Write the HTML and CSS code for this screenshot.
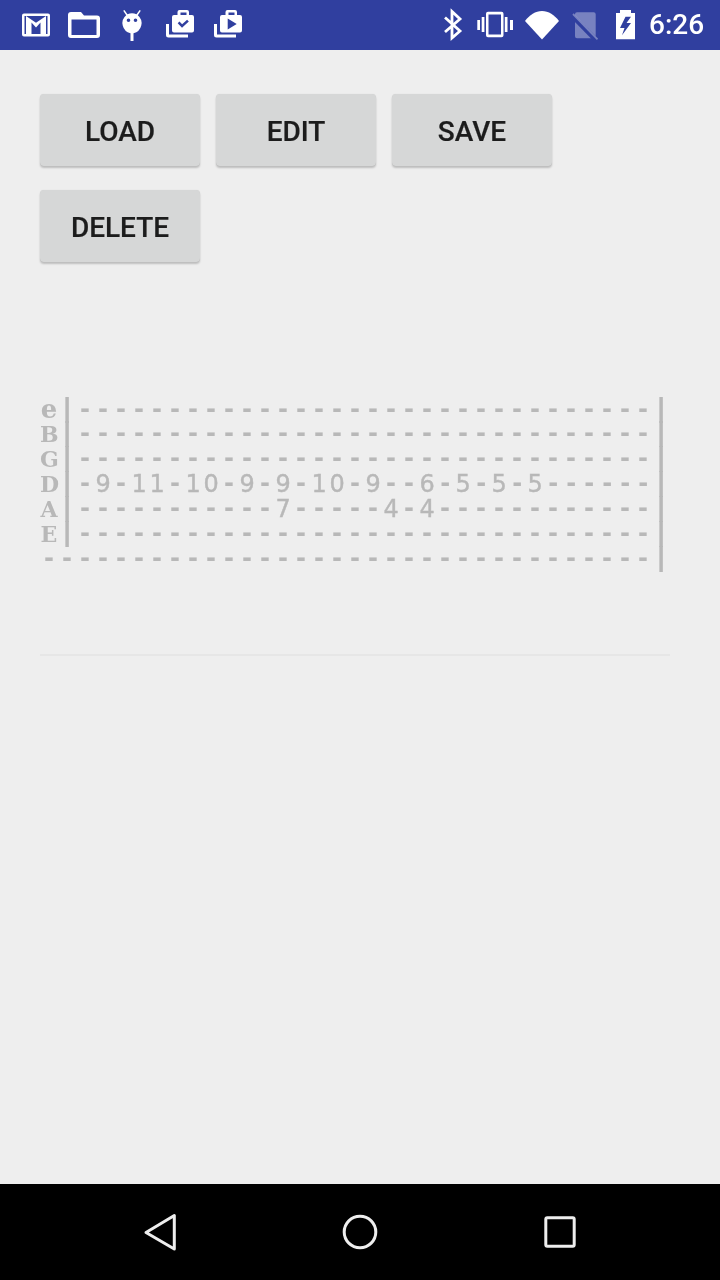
FILE: index.html
```html
<!DOCTYPE html>
<html lang="en">
<head>
<meta charset="utf-8">
<title>Tabs</title>
<link rel="stylesheet" href="styles.css">
</head>
<body>
<div class="screen">
  <header class="status">
    <div class="status-group">
      <svg class="ic w48" viewBox="12 0 48 50"><path fill="#fff" fill-rule="evenodd" d="M24 13.500h24a2 2 0 0 1 2 2v19a2 2 0 0 1-2 2H24a2 2 0 0 1-2-2v-19a2 2 0 0 1 2-2zM24.500 16v18h23V16z"/><path fill="#fff" d="M26 16L36 22.800 46 16V34H40.500V22.500L36 27.500 31.500 22.500V34H26z"/></svg>
      <svg class="ic w48" viewBox="60 0 48 50"><path fill="#fff" fill-rule="evenodd" d="M71 12h10l3 3.500h13a3 3 0 0 1 3 3V35a3 3 0 0 1-3 3H71a3 3 0 0 1-3-3V15a3 3 0 0 1 3-3zM71.500 19.500v15.500h25V19.500z"/></svg>
      <svg class="ic w48" viewBox="108 0 48 50"><path fill="#fff" fill-rule="evenodd" d="M123.200 10.800l1.200-.8 3.100 4.300a10.300 10.300 0 0 1 9 0l3.100-4.300 1.200.8-3 4.400A10.300 10.300 0 0 1 133.500 33.200V41h-3V33.200A10.300 10.300 0 0 1 126.200 15.200zM128.500 18.500a1.800 1.800 0 1 0 0 3.600 1.800 1.800 0 0 0 0-3.600zm7 0a1.800 1.800 0 1 0 0 3.600 1.800 1.800 0 0 0 0-3.600z"/></svg>
      <svg class="ic w48" viewBox="156 0 48 50"><path fill="#fff" fill-rule="evenodd" d="M166 24h3v10.500h19v3h-19.500a2.500 2.500 0 0 1-2.500-2.500zM174 15h3.500v-3a2 2 0 0 1 2-2h7.500a2 2 0 0 1 2 2v3h3a2 2 0 0 1 2 2v13.500a2 2 0 0 1-2 2h-18a2 2 0 0 1-2-2V17a2 2 0 0 1 2-2zm6.500-2.500V15h6v-2.500zM179.500 21.500l-1.800 1.800 4.300 4.500 6.800-6.300-1.700-1.800-5 4.600z"/></svg>
      <svg class="ic w48" viewBox="204 0 48 50"><path fill="#fff" fill-rule="evenodd" d="M214 24h3v10.500h19v3h-19.500a2.500 2.500 0 0 1-2.500-2.500zM222 15h3.500v-3a2 2 0 0 1 2-2h7.500a2 2 0 0 1 2 2v3h3a2 2 0 0 1 2 2v13.500a2 2 0 0 1-2 2h-18a2 2 0 0 1-2-2V17a2 2 0 0 1 2-2zm6.500-2.500V15h6v-2.500zM227.700 18.500v11l9-5.500z"/></svg>
    </div>
    <div class="status-group">
      <svg class="ic w48" viewBox="429 0 48 50"><path fill="none" stroke="#fff" stroke-width="2.800" d="M445 17.500L460 31l-8 7V11.500l8 7.500-15 13"/></svg>
      <svg class="ic w36" viewBox="477 0 36 50"><path fill="#fff" fill-rule="evenodd" d="M488 11.700h13.500a2 2 0 0 1 2 2v21.600a2 2 0 0 1-2 2H488a2 2 0 0 1-2-2V13.700a2 2 0 0 1 2-2zm.500 2.800v20h12.500v-20zM477.300 20h2.700v10h-2.700zM481.700 17h2.700v15h-2.700zM504.800 17h2.700v15h-2.700zM510 20h3v10h-3z"/></svg>
      <svg class="ic w58" viewBox="513 0 58 50"><path fill="#fff" d="M542 39.500L525 21c4.500-6 10.500-10 17-10s12.500 4 17 10z"/></svg>
      <svg class="ic w29" viewBox="571 0 29 50"><path fill="#fff" fill-opacity=".35" d="M577 12.300h16.700a2 2 0 0 1 2 2v22a2 2 0 0 1-2 2H577a2 2 0 0 1-2-2v-22a2 2 0 0 1 2-2z"/><path stroke="#303f9f" stroke-width="5" d="M571 14.500L598 42"/><path stroke="#fff" stroke-opacity=".35" stroke-width="1.800" d="M573 14l24.500 25.300"/></svg>
      <svg class="ic w49" viewBox="600 0 49 50"><path fill="#fff" fill-rule="evenodd" d="M620 10h11v3h4v26.300h-19V13h4zM625.500 16.800L620 28h4.500L622 35.300 631 23h-4.500l4.500-6.200z"/></svg>
      <span class="clock">6:26</span>
    </div>
  </header>

  <main class="content">
    <div class="buttons">
      <button class="btn">Load</button>
      <button class="btn">Edit</button>
      <button class="btn">Save</button>
      <button class="btn">Delete</button>
    </div>
    <div class="tab">
      <div class="row"><span class="str low">e</span><span class="bar">|</span><span class="dash">--------------------------------</span><span class="bar end">|</span></div>
      <div class="row"><span class="str">B</span><span class="bar">|</span><span class="dash">--------------------------------</span><span class="bar end">|</span></div>
      <div class="row"><span class="str">G</span><span class="bar">|</span><span class="dash">--------------------------------</span><span class="bar end">|</span></div>
      <div class="row"><span class="str">D</span><span class="bar">|</span><span class="dash">-</span><span class="num">9</span><span class="dash">-</span><span class="num">11</span><span class="dash">-</span><span class="num">10</span><span class="dash">-</span><span class="num">9</span><span class="dash">-</span><span class="num">9</span><span class="dash">-</span><span class="num">10</span><span class="dash">-</span><span class="num">9</span><span class="dash">--</span><span class="num">6</span><span class="dash">-</span><span class="num">5</span><span class="dash">-</span><span class="num">5</span><span class="dash">-</span><span class="num">5</span><span class="dash">------</span><span class="bar end">|</span></div>
      <div class="row"><span class="str">A</span><span class="bar">|</span><span class="dash">-----------</span><span class="num">7</span><span class="dash">-----</span><span class="num">4</span><span class="dash">-</span><span class="num">4</span><span class="dash">------------</span><span class="bar end">|</span></div>
      <div class="row"><span class="str">E</span><span class="bar">|</span><span class="dash">--------------------------------</span><span class="bar end">|</span></div>
      <div class="row"><span class="dash">----------------------------------</span><span class="bar end">|</span></div>
    </div>
    <div class="rule"></div>
  </main>

  <nav class="navbar">
    <svg class="nav-ic" viewBox="0 0 40 40"><path fill="none" stroke="#eee" stroke-width="3" stroke-linejoin="round" d="M6 20.500L34.300 3.500V37z"/></svg>
    <svg class="nav-ic" viewBox="0 0 40 40"><circle cx="20" cy="20" r="15.800" fill="none" stroke="#eee" stroke-width="3"/></svg>
    <svg class="nav-ic" viewBox="0 0 40 40"><rect x="5.800" y="5.800" width="28.400" height="28.400" rx="1.500" fill="none" stroke="#eee" stroke-width="3"/></svg>
  </nav>
</div>
</body>
</html>
```

FILE: styles.css
```css
* { box-sizing: border-box; }
html, body { margin: 0; padding: 0; }
body { background: #eeeeee; font-family: "Roboto", sans-serif; }
.screen { width: 720px; height: 1280px; display: flex; flex-direction: column; overflow: hidden; }

.status { height: 50px; flex: none; background: #303f9f; display: flex; justify-content: space-between; align-items: center; padding: 0 16px 0 12px; }
.status-group { display: flex; align-items: center; }
.ic { height: 50px; display: block; flex: none; }
.w48 { width: 48px; }
.w36 { width: 36px; }
.w58 { width: 58px; }
.w29 { width: 29px; }
.w49 { width: 49px; }
.clock { flex: none; width: 55px; color: #fff; font-size: 28px; font-weight: 500; line-height: 50px; will-change: transform; }

.content { flex: 1; padding: 44px 50px 0 40px; will-change: transform; }
.buttons { display: flex; flex-wrap: wrap; gap: 24px 16px; }
.btn { width: 160px; height: 72px; border: 0; border-radius: 4px; background: #d6d7d7; color: #1c1c1c; font-family: "Roboto", sans-serif; font-size: 28px; font-weight: 500; -webkit-text-stroke: .2px #1c1c1c; text-transform: uppercase; padding: 2px 0 0; box-shadow: 0 2px 2px rgba(0,0,0,.2), 0 0 1px rgba(0,0,0,.15); }

.tab { margin-top: 135px; color: #b8b8b8; }
.row { height: 25px; line-height: 25px; white-space: nowrap; display: flex; align-items: baseline; }
.str { flex: none; width: 18px; text-align: center; font-family: "DejaVu Serif", serif; font-size: 22px; font-weight: 700; }
.str.low { font-size: 26px; }
.bar { flex: none; width: 18px; text-align: center; font-family: "Liberation Mono", monospace; font-size: 27px; font-weight: 700; transform: translateY(-1px); }
.bar.end { margin-left: auto; }
.dash { flex: none; font-family: "DejaVu Sans", sans-serif; font-size: 24px; font-weight: 700; letter-spacing: 8.04px; padding-left: 4px; margin-right: -4px; transform: translateY(-1.5px); }
.num { flex: none; font-family: "DejaVu Sans", sans-serif; font-size: 24px; -webkit-text-stroke: .4px #b8b8b8; letter-spacing: 2.73px; padding-left: 1.37px; margin-right: -1.37px; }

.rule { height: 2px; background: #e6e6e6; margin-top: 82px; }

.navbar { height: 96px; flex: none; background: #000; display: flex; justify-content: center; align-items: center; gap: 160px; }
.nav-ic { width: 40px; height: 40px; display: block; }
```
